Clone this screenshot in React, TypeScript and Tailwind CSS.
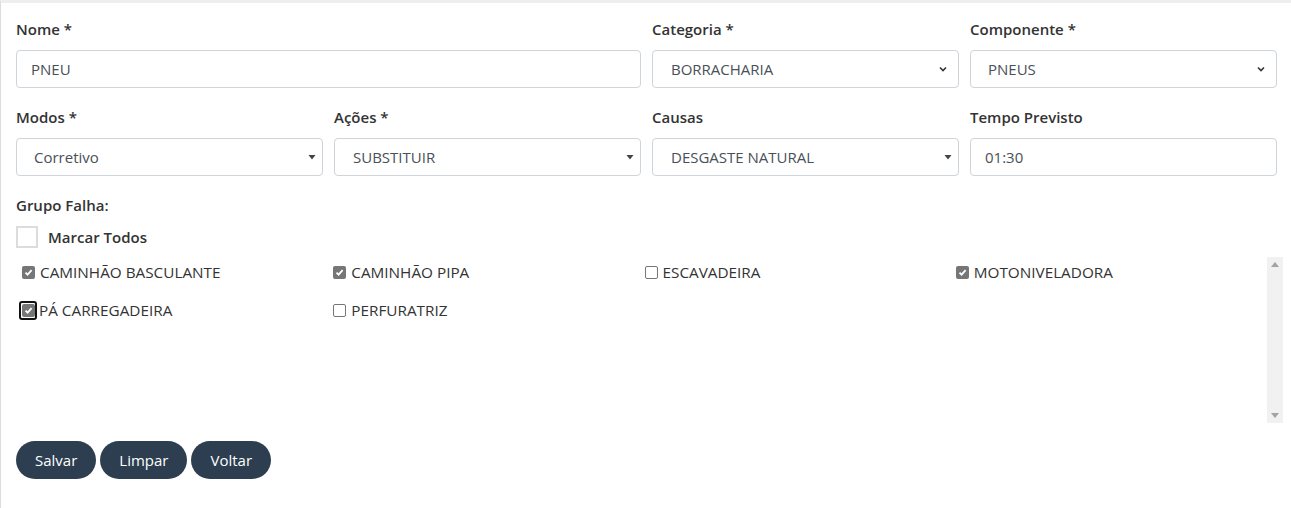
import React from 'react';

const font = { fontFamily: '"Open Sans", "Noto Sans", sans-serif' };

const Chevron = () => (
  <svg width="10" height="10" viewBox="0 0 10 10" className="absolute right-[10px] top-1/2 -translate-y-1/2">
    <path d="M2 3.5 L5 6.5 L8 3.5" fill="none" stroke="#333" strokeWidth="1.6" />
  </svg>
);

const Triangle = () => (
  <svg width="8" height="6" viewBox="0 0 8 6" className="absolute right-[6px] top-1/2 -translate-y-1/2">
    <path d="M0.5 1 L7.5 1 L4 5.5 Z" fill="#444" />
  </svg>
);

const Field: React.FC<{ label: string; children: React.ReactNode; className?: string }> = ({ label, children, className }) => (
  <div className={className}>
    <div className="text-[15px] font-semibold text-[#333] leading-[22px] mb-[10px]">{label}</div>
    {children}
  </div>
);

const Box: React.FC<{ value: string; pl: string; arrow?: 'chevron' | 'triangle' }> = ({ value, pl, arrow }) => (
  <div className={`relative h-[38px] border border-[#ced4da] rounded-[4px] bg-white flex items-center ${pl} text-[15px] text-[#495057]`}>
    {value}
    {arrow === 'chevron' && <Chevron />}
    {arrow === 'triangle' && <Triangle />}
  </div>
);

const Check: React.FC<{ checked?: boolean; focus?: boolean }> = ({ checked, focus }) => {
  const box = checked ? (
    <span className="w-[13px] h-[13px] rounded-[2px] bg-[#767676] flex items-center justify-center">
      <svg width="9" height="9" viewBox="0 0 9 9">
        <path d="M1.5 4.6 L3.6 6.7 L7.6 2.2" fill="none" stroke="#fff" strokeWidth="1.8" />
      </svg>
    </span>
  ) : (
    <span className="w-[13px] h-[13px] rounded-[2px] border border-[#767676] bg-white" />
  );
  if (focus)
    return (
      <span className="w-[19px] h-[19px] rounded-[3px] border-2 border-[#111] flex items-center justify-center">{box}</span>
    );
  return box;
};

const items = [
  { label: 'CAMINHÃO BASCULANTE', checked: true },
  { label: 'CAMINHÃO PIPA', checked: true },
  { label: 'ESCAVADEIRA', checked: false },
  { label: 'MOTONIVELADORA', checked: true },
  { label: 'PÁ CARREGADEIRA', checked: true, focus: true },
  { label: 'PERFURATRIZ', checked: false },
];

export default function App() {
  return (
    <div style={font} className="w-[1291px] h-[508px] bg-white border-t-[3px] border-t-[#eceeef] border-l border-l-[#dcdcdc] overflow-hidden">
      <div className="pl-[15px] pr-[14px] pt-[15px]">
        <div className="grid grid-cols-4 gap-x-[11px] gap-y-[18px]">
          <Field label="Nome *" className="col-span-2">
            <Box value="PNEU" pl="pl-[14px]" />
          </Field>
          <Field label="Categoria *">
            <Box value="BORRACHARIA" pl="pl-[18px]" arrow="chevron" />
          </Field>
          <Field label="Componente *">
            <Box value="PNEUS" pl="pl-[17px]" arrow="chevron" />
          </Field>
          <Field label="Modos *">
            <Box value="Corretivo" pl="pl-[17px]" arrow="triangle" />
          </Field>
          <Field label="Ações *">
            <Box value="SUBSTITUIR" pl="pl-[18px]" arrow="triangle" />
          </Field>
          <Field label="Causas">
            <Box value="DESGASTE NATURAL" pl="pl-[18px]" arrow="triangle" />
          </Field>
          <Field label="Tempo Previsto">
            <Box value="01:30" pl="pl-[14px]" />
          </Field>
        </div>

        <div className="mt-[18px] text-[15px] font-semibold text-[#333] leading-[22px]">Grupo Falha:</div>
        <div className="mt-[10px] flex items-center">
          <span className="w-[22px] h-[22px] border-2 border-[#dcdcdc] bg-white" />
          <span className="ml-[10px] text-[15px] font-semibold text-[#333] leading-[22px]">Marcar Todos</span>
        </div>

        <div className="mt-[9px] flex h-[166px] mr-[-6px]">
          <div className="flex-1 grid grid-cols-4 content-start gap-y-[16px] pl-[6px] pt-[4px]">
            {items.map((it) => (
              <div key={it.label} className="flex items-center h-[22px] text-[15.3px] text-[#333]">
                <span className={it.focus ? 'w-[18px] ml-[-3px] flex justify-center mr-[2px]' : 'mr-[5px] flex'}>
                  <Check checked={it.checked} focus={it.focus} />
                </span>
                {it.label}
              </div>
            ))}
          </div>
          <div className="w-[16px] bg-[#f1f1f1] flex flex-col justify-between items-center py-[5px]">
            <svg width="8" height="5" viewBox="0 0 8 5"><path d="M0 5 L8 5 L4 0 Z" fill="#a3a3a3" /></svg>
            <svg width="8" height="5" viewBox="0 0 8 5"><path d="M0 0 L8 0 L4 5 Z" fill="#a3a3a3" /></svg>
          </div>
        </div>

        <div className="mt-[18px] flex gap-[4px]">
          {['Salvar', 'Limpar', 'Voltar'].map((b) => (
            <button key={b} className="h-[38px] px-[19px] rounded-full bg-[#2c3e50] text-white text-[15px]">
              {b}
            </button>
          ))}
        </div>
      </div>
    </div>
  );
}
